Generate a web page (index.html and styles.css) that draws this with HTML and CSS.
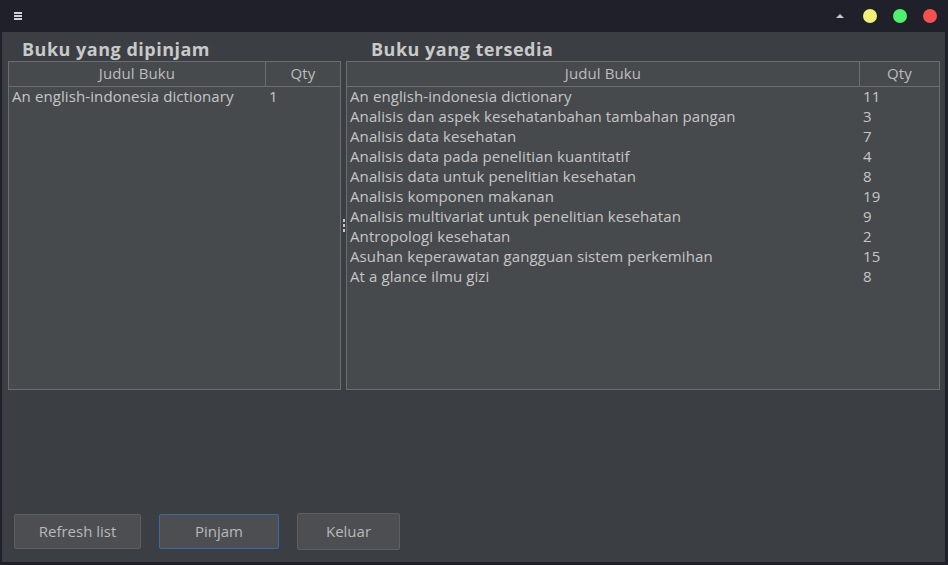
FILE: index.html
```html
<!DOCTYPE html>
<html>
<head>
<meta charset="utf-8">
<link rel="stylesheet" href="styles.css">
</head>
<body>
<div class="window">
  <div class="titlebar">
    <div class="menu-icon"><span></span><span></span><span></span></div>
    <div class="spacer"></div>
    <div class="tri"></div>
    <div class="dot yellow"></div>
    <div class="dot green"></div>
    <div class="dot red"></div>
  </div>
  <div class="content">
    <div class="panes">
      <div class="pane left">
        <div class="pane-title">Buku yang dipinjam</div>
        <div class="table">
          <div class="thead">
            <div class="c-title">Judul Buku</div>
            <div class="c-qty">Qty</div>
          </div>
          <div class="tbody">
            <div class="row"><div class="c-title">An english-indonesia dictionary</div><div class="c-qty">1</div></div>
          </div>
        </div>
      </div>
      <div class="splitter"><i></i><i></i><i></i></div>
      <div class="pane right">
        <div class="pane-title">Buku yang tersedia</div>
        <div class="table">
          <div class="thead">
            <div class="c-title">Judul Buku</div>
            <div class="c-qty">Qty</div>
          </div>
          <div class="tbody">
            <div class="row"><div class="c-title">An english-indonesia dictionary</div><div class="c-qty">11</div></div>
            <div class="row"><div class="c-title">Analisis dan aspek kesehatanbahan tambahan pangan</div><div class="c-qty">3</div></div>
            <div class="row"><div class="c-title">Analisis data kesehatan</div><div class="c-qty">7</div></div>
            <div class="row"><div class="c-title">Analisis data pada penelitian kuantitatif</div><div class="c-qty">4</div></div>
            <div class="row"><div class="c-title">Analisis data untuk penelitian kesehatan</div><div class="c-qty">8</div></div>
            <div class="row"><div class="c-title">Analisis komponen makanan</div><div class="c-qty">19</div></div>
            <div class="row"><div class="c-title">Analisis multivariat untuk penelitian kesehatan</div><div class="c-qty">9</div></div>
            <div class="row"><div class="c-title">Antropologi kesehatan</div><div class="c-qty">2</div></div>
            <div class="row"><div class="c-title">Asuhan keperawatan gangguan sistem perkemihan</div><div class="c-qty">15</div></div>
            <div class="row"><div class="c-title">At a glance ilmu gizi</div><div class="c-qty">8</div></div>
          </div>
        </div>
      </div>
    </div>
    <div class="buttons">
      <button class="btn b-refresh">Refresh list</button>
      <button class="btn b-pinjam focused">Pinjam</button>
      <button class="btn b-keluar">Keluar</button>
    </div>
  </div>
</div>
</body>
</html>
```
FILE: styles.css
```css
* { box-sizing: border-box; }
html, body { margin: 0; padding: 0; }
body {
  width: 948px; height: 565px; overflow: hidden;
  background: #1f2029;
  font-family: "Open Sans", "DejaVu Sans", sans-serif;
}
.window {
  width: 948px; height: 565px;
  display: flex; flex-direction: column;
  background: #1f2029;
  padding: 0 3px 3px 2px;
}
.titlebar {
  height: 32px; flex: none;
  display: flex; align-items: center;
  padding: 0 8px 0 12px;
}
.menu-icon { display: flex; flex-direction: column; gap: 1px; width: 8px; }
.menu-icon span { display: block; height: 2px; background: #d0d0d4; }
.spacer { flex: 1; }
.tri {
  width: 0; height: 0;
  border-left: 4px solid transparent; border-right: 4px solid transparent;
  border-bottom: 4px solid #c8c8cc;
  margin-right: 19px;
}
.dot { width: 14px; height: 14px; border-radius: 50%; margin-left: 16px; }
.dot.yellow { background: #f0f07a; margin-left: 0; }
.dot.green { background: #4ff06f; }
.dot.red { background: #f35050; }

.content {
  flex: 1;
  background: #3b3f43;
  display: flex; flex-direction: column;
  padding: 0 5px 12px 6px;
}
.panes { display: flex; height: 358px; }
.pane { display: flex; flex-direction: column; }
.pane.left { width: 333px; }
.pane.right { flex: 1; }
.splitter {
  width: 5px; display: flex; flex-direction: column; align-items: center;
  justify-content: center; gap: 2px; padding-top: 29px;
}
.splitter i { display: block; width: 2px; height: 3px; background: #c8c8c8; }
.pane-title {
  height: 29px; flex: none;
  padding-left: 14px;
  padding-top: 5px;
  font-weight: 700; font-size: 18px; line-height: 24px;
  letter-spacing: 0.5px;
  color: #c9c9c9;
}
.pane.right .pane-title { padding-left: 25px; }
.table {
  flex: 1;
  background: #464a4d;
  border: 1px solid #6b6e70;
  font-size: 15px; letter-spacing: 0.1px; color: #c6c6c6;
}
.thead {
  display: flex; height: 25px;
  border-bottom: 1px solid #6b6e70;
  line-height: 22px; color: #bdbdbd;
}
.thead .c-title { text-align: center; border-right: 1px solid #6b6e70; }
.thead .c-qty { text-align: center; }
.left .c-title { width: 257px; flex: none; }
.right .c-title { width: 513px; flex: none; }
.c-qty { flex: 1; }
.tbody .row { display: flex; height: 20px; line-height: 18px; }
.tbody .c-title { padding-left: 3px; white-space: nowrap; }
.tbody .c-qty { padding-left: 3px; }

.buttons {
  margin-top: auto;
  display: flex; align-items: center;
  padding-left: 6px;
}
.btn {
  height: 35px;
  background: #4c4e51;
  border: 1px solid #5c5e60;
  border-radius: 2px;
  color: #b9b9b9;
  font-family: inherit; font-size: 15px;
  padding: 0 0 2px 0;
}
.b-refresh { width: 127px; }
.b-pinjam { width: 120px; margin-left: 18px; }
.b-keluar { width: 103px; margin-left: 18px; height: 37px; }
.btn.focused { border-color: #3a6aa3; }
```
